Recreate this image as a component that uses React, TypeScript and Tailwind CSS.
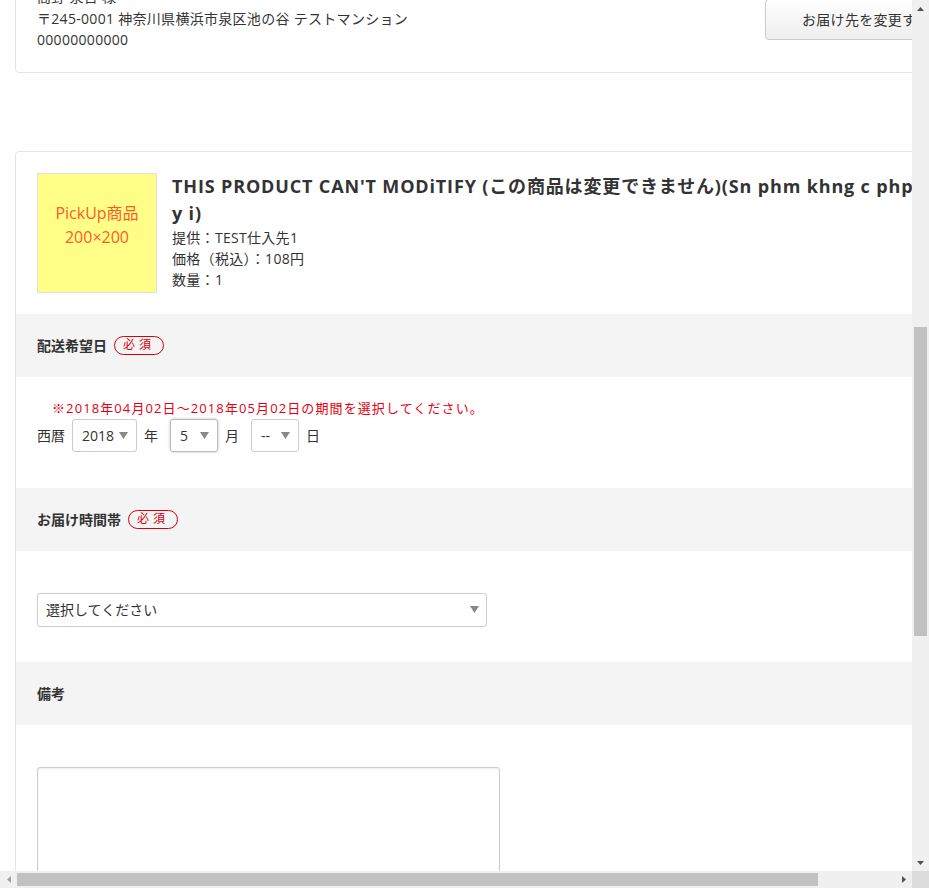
import React from 'react';

const font = "font-['Open_Sans','Noto_Sans_CJK_JP',sans-serif]";

const Required: React.FC = () => (
    <span className="ml-[7px] inline-flex h-[19px] w-[50px] items-center justify-center rounded-full border border-[#d7000f] text-[12px] font-normal tracking-[4px] text-[#d7000f] leading-none">
        必須
    </span>
);

const Arrow: React.FC = () => (
    <svg width="9" height="7" viewBox="0 0 9 7" className="shrink-0">
        <path d="M0 0 H9 L4.5 7 Z" fill="#888" />
    </svg>
);

const SectionHead: React.FC<{ label: string; required?: boolean }> = ({ label, required }) => (
    <div className="flex h-[63px] items-center bg-[#f4f4f4] px-[21px] text-[14px] font-bold text-[#333]">
        {label}
        {required && <Required />}
    </div>
);

const MiniSelect: React.FC<{ value: string; width: string; focused?: boolean }> = ({ value, width, focused }) => (
    <div
        className={`flex h-[33px] items-center justify-between rounded-[3px] border pl-[9px] pr-[8px] text-[14px] text-[#333] ${width} ${
            focused ? 'border-[#bbb] shadow-[0_0_3px_rgba(0,0,0,0.25)]' : 'border-[#ccc]'
        }`}
    >
        <span>{value}</span>
        <Arrow />
    </div>
);

export default function App() {
    return (
        <div className={`flex h-[888px] w-[929px] flex-col overflow-hidden bg-white ${font} text-[#333]`}>
            <div className="flex h-[871px] w-[929px]">
                {/* page viewport */}
                <div className="h-[871px] w-[912px] overflow-hidden">
                    <div className="-mt-[36px] w-[1000px] pl-[15px]">
                        {/* delivery address card */}
                        <div className="flex w-[970px] items-center justify-between rounded-[4px] border border-[#e5e5e5] p-[21px] text-[14px] leading-[21.5px] tracking-[0.3px]">
                            <div>
                                <p>高野 泉吾 様</p>
                                <p>〒245-0001 神奈川県横浜市泉区池の谷 テストマンション</p>
                                <p>00000000000</p>
                            </div>
                            <button className="mt-[2px] h-[41px] w-[198px] rounded-[4px] border border-[#ccc] bg-gradient-to-b from-white to-[#eeeeee] pl-[36px] text-left text-[14px] text-[#333]">
                                お届け先を変更する
                            </button>
                        </div>

                        {/* product card */}
                        <div className="mt-[78px] w-[970px] rounded-[4px] border border-[#e5e5e5]">
                            <div className="flex gap-[15px] p-[21px]">
                                <div className="flex h-[120px] w-[120px] shrink-0 flex-col items-center justify-center border border-[#e0e0e0] bg-[#ffff88] pb-[16px] text-[16px] leading-[24px] text-[#ff5a2a]">
                                    <span>PickUp商品</span>
                                    <span>200×200</span>
                                </div>
                                <div className="min-w-0">
                                    <h2 className="whitespace-nowrap text-[18px] font-bold leading-[27px] tracking-[0.85px] text-[#333]">
                                        THIS PRODUCT CAN'T MODiTIFY (この商品は変更できません)(Sn phm khng c php tha
                                        <br />
                                        y i)
                                    </h2>
                                    <div className="text-[14px] leading-[21px] tracking-[0.3px]">
                                        <p>提供：TEST仕入先1</p>
                                        <p>価格（税込）：108円</p>
                                        <p>数量：1</p>
                                    </div>
                                </div>
                            </div>

                            <SectionHead label="配送希望日" required />
                            <div className="px-[21px] pb-[36px] pt-[21px] text-[14px]">
                                <p className="pl-[15px] text-[13px] leading-[21px] tracking-[1.1px] text-[#e60012]">
                                    ※2018年04月02日～2018年05月02日の期間を選択してください。
                                </p>
                                <div className="flex items-center">
                                    <span className="mr-[7px]">西暦</span>
                                    <MiniSelect value="2018" width="w-[65px]" />
                                    <span className="ml-[7px] mr-[12px]">年</span>
                                    <MiniSelect value="5" width="w-[48px]" focused />
                                    <span className="ml-[7px] mr-[12px]">月</span>
                                    <MiniSelect value="--" width="w-[48px]" />
                                    <span className="ml-[7px]">日</span>
                                </div>
                            </div>

                            <SectionHead label="お届け時間帯" required />
                            <div className="px-[21px] pb-[35px] pt-[42px]">
                                <div className="flex h-[34px] w-[450px] items-center justify-between rounded-[3px] border border-[#ccc] pl-[8px] pr-[7px] text-[14px]">
                                    <span>選択してください</span>
                                    <Arrow />
                                </div>
                            </div>

                            <SectionHead label="備考" />
                            <div className="px-[21px] pt-[42px]">
                                <textarea className="h-[160px] w-[463px] resize-none rounded-[3px] border border-[#ccc] shadow-[inset_0_1px_2px_rgba(0,0,0,0.08)]" />
                            </div>
                        </div>
                    </div>
                </div>

                {/* vertical scrollbar */}
                <div className="flex h-[871px] w-[17px] flex-col items-center bg-[#f0f0f0]">
                    <div className="flex h-[17px] items-center justify-center">
                        <svg width="7" height="4" viewBox="0 0 7 4"><path d="M0 4 L3.5 0 L7 4 Z" fill="#505050" /></svg>
                    </div>
                    <div className="mt-[310px] h-[309px] w-[13px] bg-[#c1c1c1]" />
                    <div className="flex-1" />
                    <div className="flex h-[17px] items-center justify-center">
                        <svg width="7" height="4" viewBox="0 0 7 4"><path d="M0 0 L3.5 4 L7 0 Z" fill="#505050" /></svg>
                    </div>
                </div>
            </div>

            {/* horizontal scrollbar */}
            <div className="flex h-[17px] w-[929px]">
                <div className="flex h-[17px] w-[912px] items-center bg-[#f0f0f0]">
                    <div className="flex w-[17px] justify-center">
                        <svg width="4" height="7" viewBox="0 0 4 7"><path d="M4 0 L0 3.5 L4 7 Z" fill="#a0a0a0" /></svg>
                    </div>
                    <div className="h-[13px] w-[801px] bg-[#c1c1c1]" />
                    <div className="flex-1" />
                    <div className="flex w-[17px] justify-center">
                        <svg width="4" height="7" viewBox="0 0 4 7"><path d="M0 0 L4 3.5 L0 7 Z" fill="#505050" /></svg>
                    </div>
                </div>
                <div className="h-[17px] w-[17px] bg-[#dcdcdc]" />
            </div>
        </div>
    );
}
